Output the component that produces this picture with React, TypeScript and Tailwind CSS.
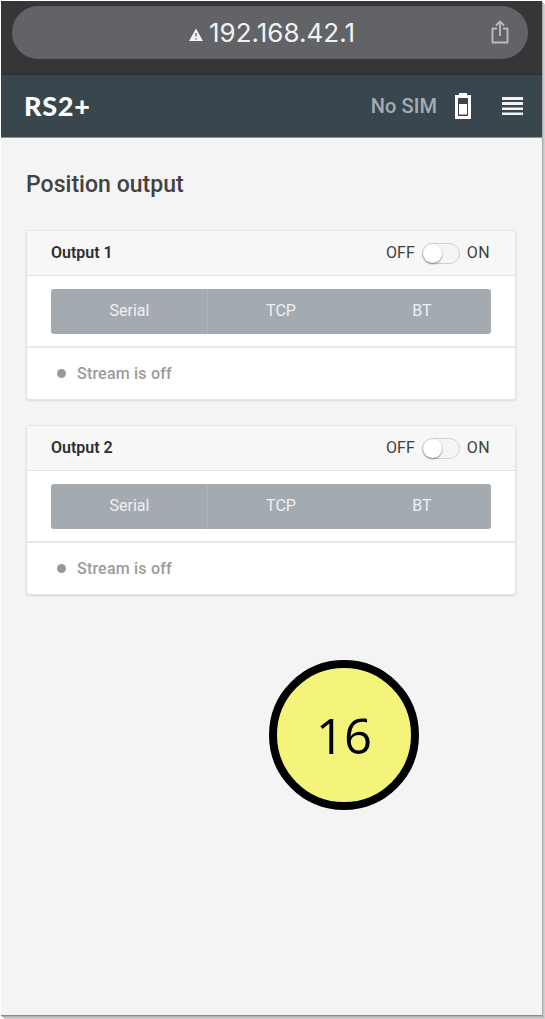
import { useState } from "react";

const protocols = [
  { label: "Serial", width: "w-[157px]" },
  { label: "TCP", width: "w-[145px]" },
  { label: "BT", width: "w-[137px]" },
];

function AddressBar() {
  return (
    <div className="h-[74px] bg-[#363638] border-b-2 border-[#2d3237] pt-[5px] pl-[11px] pr-[14px]">
      <div className="h-[53px] rounded-full bg-[#626367] flex items-center pl-[177px] pr-[19px]">
        <svg className="w-[14px] h-[13px] mt-[3px]" viewBox="0 0 14 13">
          <path d="M7 0.5L14 13H0z" fill="#f4f4f5" />
          <path d="M7 5v3.6M7 10v1.4" stroke="#626367" strokeWidth="1.3" />
        </svg>
        <span className="ml-[6px] font-['Inter',sans-serif] text-[26px] leading-8 text-[#f1f1f2]">
          192.168.42.1
        </span>
        <svg
          className="ml-auto w-[18px] h-[24px] -mt-px"
          viewBox="0 0 18 24"
          fill="none"
          stroke="#b9babc"
          strokeWidth="1.9"
        >
          <path d="M6 8.5H1.5V22.5H16.5V8.5H12" strokeLinejoin="round" />
          <path d="M9 16V2M5 5.500L9 1.500L13 5.500" />
        </svg>
      </div>
    </div>
  );
}

function Header() {
  return (
    <header className="h-[63px] bg-[#3a464d] border-b border-[#8d9599] flex items-center pl-[23px] pr-[19px] pb-px">
      <span className="font-['Lato',sans-serif] font-black text-[27px] leading-8 tracking-[0.7px] text-white">RS2+</span>
      <span className="ml-auto font-['Roboto',sans-serif] font-medium text-[20px] leading-6 tracking-[0.1px] text-[#a5acb0]">
        No SIM
      </span>
      {/* Battery */}
      <svg className="ml-[18px] w-[16px] h-[26px]" viewBox="0 0 16 26">
        <path d="M4 0h8v2h4v24H0V2h4z" fill="#fff" />
        <path d="M3 5h10v18H3z" fill="#3a464d" />
        <path d="M4 11h8v10.500H4z" fill="#fff" />
      </svg>
      {/* Menu */}
      <svg className="ml-[31px] w-[21px] h-[18px]" viewBox="0 0 21 18">
        <path d="M0 0h21v3H0zM0 5h21v3H0zM0 10.500h21v2.500H0zM0 15.500h21v2.500H0z" fill="#f2f4f4" />
      </svg>
    </header>
  );
}

function Toggle({ on, onChange }: { on: boolean; onChange: () => void }) {
  return (
    <button
      type="button"
      role="switch"
      aria-checked={on}
      onClick={onChange}
      className={`w-[38px] h-[21px] rounded-full border border-[#cfcfcf] bg-[#f5f5f5] flex items-center ${on ? "justify-end" : "justify-start"}`}
    >
      <span className="size-[19px] rounded-full bg-white shadow-[0_1px_2px_rgba(0,0,0,0.45)]" />
    </button>
  );
}

function OutputCard({ title }: { title: string }) {
  const [on, setOn] = useState(false);

  return (
    <section className="h-[170px] rounded-[3px] border border-[#e3e3e3] bg-white shadow-[0_1px_2px_rgba(0,0,0,0.12)]">
      <div className="h-[45px] bg-[#f7f7f7] border-b border-[#e3e3e3] flex items-center pl-[24px] pr-[25px] text-[16px] text-[#3f3f3f]">
        <h2 className="font-semibold text-[#2e2e2e]">{title}</h2>
        <span className="ml-auto mr-[7px]">OFF</span>
        <Toggle on={on} onChange={() => setOn(!on)} />
        <span className="ml-[7px] tracking-[0.4px]">ON</span>
      </div>
      <div className="h-[72px] border-b-2 border-[#e8e8e8] pt-[13px] px-[24px]">
        <div className="h-[45px] rounded-[3px] bg-[#a3abb1] flex overflow-hidden text-[16px] text-[#edf1f4]">
          {protocols.map((p, i) => (
            <button
              key={p.label}
              type="button"
              className={`${p.width} pb-[2px] pl-px ${i === 0 ? "border-r border-[#afb6bb]" : ""}`}
            >
              {p.label}
            </button>
          ))}
        </div>
      </div>
      <div className="h-[51px] flex items-center pl-[30px]">
        <span className="size-[9px] rounded-full bg-[#999]" />
        <span className="ml-[11px] text-[16px] font-medium tracking-[0.2px] text-[#9b9b9b]">Stream is off</span>
      </div>
    </section>
  );
}

export default function App() {
  return (
    <div className="w-[545px] h-[1019px] bg-white pl-px pt-px overflow-hidden font-['Roboto',sans-serif]">
      <div className="relative w-[541px] h-[1015px] bg-[#f4f4f4] border-b border-[#8a8a8a] shadow-[1px_1px_0_#adadad,2px_2px_0_#c4c4c4,3px_3px_0_#cfcfcf]">
        <AddressBar />
        <Header />
        <main className="pl-[25px] pr-[26px] pt-[31px]">
          <h1 className="text-[23px] leading-[32px] font-medium tracking-[0.03px] text-[#424242]">Position output</h1>
          <div className="mt-[29px] flex flex-col gap-[25px]">
            <OutputCard title="Output 1" />
            <OutputCard title="Output 2" />
          </div>
        </main>
        {/* Step marker over the screen */}
        <div className="absolute left-[268px] top-[659px] size-[150px] rounded-full border-[8px] border-black bg-[#f4f47a] flex items-center justify-center font-['Open_Sans',sans-serif] text-[49px] leading-none text-black">
          16
        </div>
      </div>
    </div>
  );
}
